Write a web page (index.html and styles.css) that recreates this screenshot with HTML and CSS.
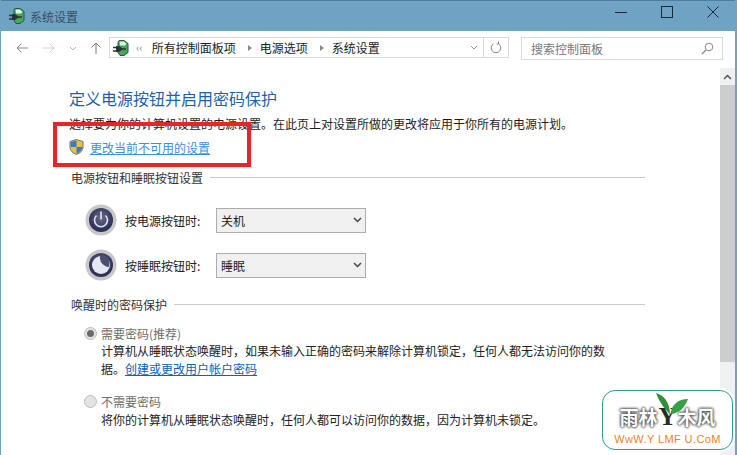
FILE: index.html
```html
<!DOCTYPE html>
<html lang="zh-CN">
<head>
<meta charset="utf-8">
<title>系统设置</title>
<link rel="stylesheet" href="styles.css">
</head>
<body>
<div class="window">
  <header class="titlebar">
    <svg class="app-icon" width="18" height="18" viewBox="0 0 18 18"><path d="M7 1.500h5l4 3v9l-4 3H8l-2-3V3z" fill="#43a85a" stroke="#1f5f34"/><path d="M7.500 2.500h4.500l2.500 2.500-1.500 1.500H8z" fill="#e4f3e4"/><path d="M1 8.500h3M1 12h3" stroke="#2b3238" stroke-width="1.300"/><path d="M4 7h3l3 2v2l-3 2H4z" fill="#2b3238"/><path d="M10 10h4" stroke="#2b3238" stroke-width="1.500"/></svg>
    <span class="title">系统设置</span>
    <div class="controls">
      <svg width="14" height="14" viewBox="0 0 14 14"><path d="M1 7.500h12" stroke="#1a2a35"/></svg>
      <svg width="14" height="14" viewBox="0 0 14 14"><rect x="1.500" y="1.500" width="11" height="11" fill="none" stroke="#1a2a35"/></svg>
      <svg width="14" height="14" viewBox="0 0 14 14"><path d="M1.500 1.500l11 11M12.500 1.500l-11 11" stroke="#1a2a35"/></svg>
    </div>
  </header>
  <nav class="navbar">
    <div class="nav-buttons">
      <svg width="14" height="12" viewBox="0 0 14 12"><path d="M13 6H2M6.500 1.500L2 6l4.500 4.500" fill="none" stroke="#8a8a8a"/></svg>
      <svg width="14" height="12" viewBox="0 0 14 12"><path d="M1 6h11M7.500 1.500L12 6l-4.500 4.500" fill="none" stroke="#d0d0d0"/></svg>
      <svg width="8" height="12" viewBox="0 0 8 12"><path d="M1 5l3 3 3-3" fill="none" stroke="#b8b8b8"/></svg>
      <svg width="12" height="14" viewBox="0 0 12 14"><path d="M6 13V2M1.500 6.500L6 2l4.500 4.500" fill="none" stroke="#777"/></svg>
    </div>
    <div class="address">
      <svg class="addr-icon" width="18" height="18" viewBox="0 0 18 18"><path d="M7 1.500h5l4 3v9l-4 3H8l-2-3V3z" fill="#43a85a" stroke="#1f5f34"/><path d="M7.500 2.500h4.500l2.500 2.500-1.500 1.500H8z" fill="#e4f3e4"/><path d="M1 8.500h3M1 12h3" stroke="#2b3238" stroke-width="1.300"/><path d="M4 7h3l3 2v2l-3 2H4z" fill="#2b3238"/><path d="M10 10h4" stroke="#2b3238" stroke-width="1.500"/></svg>
      <span class="chev">‹‹</span>
      <span class="crumb">所有控制面板项</span><span class="sep"></span>
      <span class="crumb">电源选项</span><span class="sep"></span>
      <span class="crumb">系统设置</span>
      <svg class="addr-down" width="8" height="6" viewBox="0 0 8 6"><path d="M1 1l3 3 3-3" fill="none" stroke="#999"/></svg>
      <span class="refresh"><svg width="12" height="13" viewBox="0 0 12 13"><path d="M8.500 2.800A4.800 4.800 0 1 1 3.500 2.800M8.500 0.500v2.500h-2" fill="none" stroke="#888"/></svg></span>
    </div>
    <div class="search">
      <span>搜索控制面板</span>
      <svg width="13" height="13" viewBox="0 0 13 13"><circle cx="8" cy="5" r="3.800" fill="none" stroke="#888"/><path d="M5 8l-4 4" stroke="#888" stroke-width="1.200"/></svg>
    </div>
  </nav>
  <div class="body">
    <main class="content">
      <h1 class="heading">定义电源按钮并启用密码保护</h1>
      <p class="intro">选择要为你的计算机设置的电源设置。在此页上对设置所做的更改将应用于你所有的电源计划。</p>
      <div class="uac">
        <svg width="15" height="16" viewBox="0 0 15 16"><path d="M7.500 0.500L14 2.500V8c0 4-3 6-6.500 7.500C4 14 1 12 1 8V2.500z" fill="#e8c040" stroke="#6d7480"/><path d="M7.500 1.500V8H1.800V3zM7.500 8h5.800c-.2 3.300-3 5.300-5.800 6.500z" fill="#3d78c8"/></svg>
        <a class="link-light" href="#">更改当前不可用的设置</a>
      </div>
      <div class="group">
        <span class="group-label">电源按钮和睡眠按钮设置</span><span class="rule"></span>
      </div>
      <div class="setting first">
        <svg width="32" height="32" viewBox="0 0 32 32"><defs><radialGradient id="g1" cx="50%" cy="40%"><stop offset="0" stop-color="#6a6c90"/><stop offset="1" stop-color="#2f3258"/></radialGradient></defs><circle cx="16" cy="16" r="15.500" fill="#c8c8c8"/><circle cx="16" cy="16" r="12" fill="url(#g1)"/><path d="M11.500 11.500a6.500 6.500 0 1 0 9 0" fill="none" stroke="#e3e5ee" stroke-width="1.600"/><path d="M16 7.500v8" stroke="#e3e5ee" stroke-width="1.600"/></svg>
        <label class="setting-label">按电源按钮时:</label>
        <div class="select"><span>关机</span><svg width="9" height="6" viewBox="0 0 9 6"><path d="M1 1l3.500 3.500L8 1" fill="none" stroke="#444" stroke-width="1.500"/></svg></div>
      </div>
      <div class="setting">
        <svg width="32" height="32" viewBox="0 0 32 32"><circle cx="16" cy="16" r="15.500" fill="#c8c8c8"/><circle cx="16" cy="16" r="12" fill="url(#g1)"/><circle cx="16" cy="16" r="9" fill="#e6e8f0"/><path d="M15 7.200c-.5 5 2 9 8.500 11 1.500-3 1.200-6.500-1-8.800S18 6.800 15 7.200z" fill="#4a4d70"/></svg>
        <label class="setting-label">按睡眠按钮时:</label>
        <div class="select"><span>睡眠</span><svg width="9" height="6" viewBox="0 0 9 6"><path d="M1 1l3.500 3.500L8 1" fill="none" stroke="#444" stroke-width="1.500"/></svg></div>
      </div>
      <div class="group second">
        <span class="group-label">唤醒时的密码保护</span><span class="rule"></span>
      </div>
      <div class="option opt-first">
        <span class="radio checked"></span><span class="opt-label">需要密码(推荐)</span>
      </div>
      <p class="desc wrap">计算机从睡眠状态唤醒时，如果未输入正确的密码来解除计算机锁定，任何人都无法访问你的数据。<a class="link" href="#">创建或更改用户帐户密码</a></p>
      <div class="option opt-second">
        <span class="radio"></span><span class="opt-label">不需要密码</span>
      </div>
      <p class="desc tail">将你的计算机从睡眠状态唤醒时，任何人都可以访问你的数据，因为计算机未锁定。</p>
    </main>
    <div class="scrollbar">
      <div class="scroll-up"><svg width="9" height="6" viewBox="0 0 9 6"><path d="M1 5l3.500-3.500L8 5" fill="none" stroke="#555" stroke-width="1.500"/></svg></div>
      <div class="thumb"></div>
    </div>
  </div>
  <div class="redbox"></div>
  <div class="watermark">
    <svg class="leaf" width="32" height="24" viewBox="0 0 32 24"><path d="M14 23C10 17 5 14 0 1c7 2 14 8 14 22z" fill="#2f8f3a"/><path d="M15 22c0-9 7-15 17-15-3 8-8 14-17 15z" fill="#35a046"/></svg>
    <div class="wm-title"><span>雨林</span><span class="wm-y">Y</span><span>木风</span></div>
    <div class="wm-url">WwW.Y LMF U.CoM</div>
  </div>
</div>
</body>
</html>
```

FILE: styles.css
```css
* { box-sizing: border-box; }
html, body { margin: 0; padding: 0; }
body {
  width: 737px;
  height: 455px;
  overflow: hidden;
  font-family: "Noto Sans CJK SC", "Liberation Sans", sans-serif;
  font-size: 12px;
  color: #1c1c1c;
  background: #fff;
  text-spacing-trim: space-all;
}
.window {
  position: relative;
  width: 737px;
  height: 455px;
  display: flex;
  flex-direction: column;
  border-left: 1px solid #6fa3c4;
  border-right: 2px solid #6fa3c4;
  overflow: hidden;
}
.titlebar {
  height: 31px;
  flex: none;
  display: flex;
  align-items: center;
  background: #6fa3c4;
  border-top: 1px solid #4f7f9c;
  padding-left: 7px;
}
.title { margin-left: 4px; font-size: 12px; color: #33505f; }
.controls {
  margin-left: auto;
  display: flex;
  gap: 32px;
  padding-right: 15px;
  margin-top: -8px;
}
.navbar {
  height: 37px;
  flex: none;
  display: flex;
  align-items: flex-start;
  padding-top: 6px;
}
.nav-buttons {
  width: 108px;
  height: 21px;
  display: flex;
  align-items: center;
  gap: 13px;
  padding-left: 14px;
}
.address {
  width: 400px;
  height: 21px;
  display: flex;
  align-items: center;
  border: 1px solid #d9d9d9;
  margin-right: 12px;
  flex: none;
}
.addr-icon { margin-left: 2px; flex: none; }
.chev { margin: 0 9px 0 6px; color: #888; font-size: 11px; line-height: 1; }
.crumb { font-size: 12px; color: #1c1c1c; white-space: nowrap; }
.sep {
  width: 0; height: 0;
  margin: 0 8px 0 12px;
  border-left: 4px solid #888;
  border-top: 3px solid transparent;
  border-bottom: 3px solid transparent;
}
.addr-down { margin-left: auto; margin-right: 5px; }
.refresh {
  width: 25px;
  height: 100%;
  border-left: 1px solid #d9d9d9;
  display: flex;
  align-items: center;
  justify-content: center;
}
.search {
  width: 202px;
  height: 23px;
  flex: none;
  display: flex;
  align-items: center;
  justify-content: space-between;
  border: 1px solid #d9d9d9;
  padding: 0 8px 0 9px;
  color: #777;
}
.body { flex: 1; display: flex; min-height: 0; }
.content { flex: 1; min-width: 0; padding: 0 75px 0 68px; }
.heading {
  margin: 20px 0 0;
  font-size: 16px;
  font-weight: 400;
  line-height: 20px;
  color: #1f5fa8;
}
.intro { margin: 7px -30px 0 0; line-height: 18px; white-space: nowrap; font-size: 12px; }
.uac { display: flex; align-items: center; gap: 6px; height: 18px; margin-top: 5px; }
.link-light { color: #3d8fe0; }
.link { color: #0b63b5; }
.group { display: flex; align-items: center; gap: 7px; margin-top: 12px; height: 18px; padding-left: 2px; }
.group-label { color: #333; white-space: nowrap; font-size: 12px; }
.rule { flex: 1; height: 1px; background: #c9c9c9; }
.setting { display: flex; align-items: center; margin: 13px 0 0 16px; height: 32px; }
.setting.first { margin-top: 18px; }
.setting-label { margin-left: 8px; width: 91px; white-space: nowrap; color: #222; }
.select {
  width: 150px;
  height: 25px;
  display: flex;
  align-items: center;
  justify-content: space-between;
  padding: 0 3px 0 4px;
  background: #f0f0f0;
  border: 1px solid #acacac;
}
.group.second { margin-top: 14px; }
.option { display: flex; align-items: center; height: 16px; padding-left: 15px; color: #6d6d6d; }
.opt-first { margin-top: 12px; }
.opt-second { margin-top: 15px; }
.radio {
  width: 13px;
  height: 13px;
  border-radius: 50%;
  background: #e3e3e3;
  border: 1px solid #bdbdbd;
  margin-right: 4px;
  position: relative;
  flex: none;
}
.radio.checked::after {
  content: "";
  position: absolute;
  left: 2px; top: 2px;
  width: 7px; height: 7px;
  border-radius: 50%;
  background: #6a6a6a;
}
.desc { margin: 1px 0 0 32px; line-height: 18px; color: #222; }
.desc.wrap { margin-right: 34px; }
.desc.tail { margin-top: 2px; }
.scrollbar { width: 15px; flex: none; background: #f0f0f0; margin-top: 0; }
.scroll-up { height: 17px; display: flex; align-items: center; justify-content: center; }
.thumb { height: 277px; background: #cdcdcd; }
.redbox {
  position: absolute;
  left: 52px; top: 122px;
  width: 198px; height: 45px;
  border: 4px solid #e8242a;
  pointer-events: none;
}
.watermark {
  position: absolute;
  left: 601px; top: 390px;
  width: 131px;
  height: 60px;
  background: #fff;
  border: 1.500px solid #2f9c96;
  border-radius: 13px;
  box-shadow: 0 0 0 2px #fff;
  display: flex;
  flex-direction: column;
  align-items: center;
  padding-top: 15px;
}
.leaf { position: absolute; left: 53px; top: 1px; z-index: 1; }
.wm-title {
  display: flex;
  align-items: center;
  font-size: 19px;
  font-weight: 700;
  line-height: 22px;
  color: #fff;
  text-shadow: 0 0 3px #444, 0 0 3px #444, 0 0 2px #666;
  gap: 1px;
}
.wm-y { font-family: "Liberation Serif", serif; font-size: 25px; color: #2a2a2a; text-shadow: none; }
.wm-url { font-family: "Liberation Sans", sans-serif; font-size: 11px; line-height: 13px; margin-top: 5px; color: #ef7f2b; letter-spacing: 0.400px; white-space: nowrap; }
```
